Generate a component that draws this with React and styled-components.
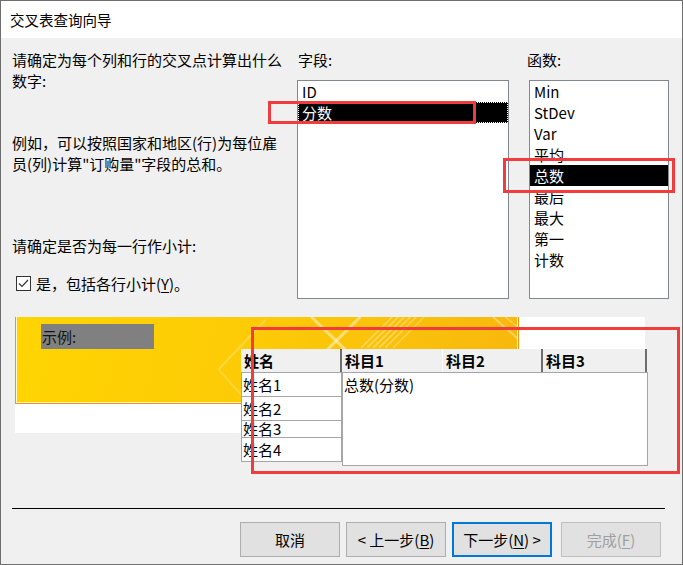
import React from "react";
import styled, { createGlobalStyle } from "styled-components";

const GlobalStyle = createGlobalStyle`
  html, body {
    margin: 0;
    padding: 0;
    background: #ffffff;
  }
  body {
    font-family: "Noto Sans CJK SC", "Liberation Sans", sans-serif;
    color: #000;
  }
`;

const fieldItems = ["ID", "分数"];
const funcItems = ["Min", "StDev", "Var", "平均", "总数", "最后", "最大", "第一", "计数"];
const rowNames = [
  { name: "姓名1", h: 24 },
  { name: "姓名2", h: 24 },
  { name: "姓名3", h: 17 },
  { name: "姓名4", h: 24 },
];
const columns = [
  { name: "科目1", w: 101, dark: false },
  { name: "科目2", w: 100, dark: true },
  { name: "科目3", w: 104, dark: true },
];

const App = () => {
  return (
    <>
      <GlobalStyle />
      <Window>
        <TitleBar>交叉表查询向导</TitleBar>

        <TopSection>
          <LeftCol>
            <Para>
              请确定为每个列和行的交叉点计算出什么
              <br />
              数字:
            </Para>
            <Para $gap={41}>
              例如，可以按照国家和地区(行)为每位雇
              <br />
              员(列)计算"订购量"字段的总和。
            </Para>
            <Para $gap={61}>请确定是否为每一行作小计:</Para>
            <CheckRow>
              <CheckBox>
                <svg width="13" height="13" viewBox="0 0 13 13">
                  <path d="M2 6.5 L5 9.5 L11 3" fill="none" stroke="#333" strokeWidth="1.2" />
                </svg>
              </CheckBox>
              <span>
                是，包括各行小计(<U>Y</U>)。
              </span>
            </CheckRow>
          </LeftCol>

          <FieldCol>
            <ColLabel $pad={1}>字段:</ColLabel>
            <ListBox $width={212}>
              {fieldItems.map((f) => (
                <ListItem key={f} $selected={f === "分数"} $focus={f === "分数"}>
                  {f}
                </ListItem>
              ))}
            </ListBox>
          </FieldCol>

          <FuncCol>
            <ColLabel>函数:</ColLabel>
            <ListBox $width={140} $shift={2}>
              {funcItems.map((f) => (
                <ListItem key={f} $selected={f === "总数"}>
                  {f}
                </ListItem>
              ))}
            </ListBox>
          </FuncCol>
        </TopSection>

        <SampleArea>
          <SampleBox>
            <Banner>
              <BannerArt viewBox="0 0 503 87" preserveAspectRatio="none">
                <g stroke="#fff" fill="none">
                  <path d="M203 53 L250 3" strokeWidth="2" opacity="0.25" />
                  <path d="M203 53 L232 86" strokeWidth="2" opacity="0.2" />
                  <path d="M296 0 L370 72" strokeWidth="3" opacity="0.45" />
                  <path d="M345 0 L290 55" strokeWidth="3" opacity="0.45" />
                  <path d="M346 31 L377 0" strokeWidth="1.5" opacity="0.35" />
                  <path d="M352 31 L383 0" strokeWidth="1.5" opacity="0.35" />
                  <path d="M358 31 L389 0" strokeWidth="1.5" opacity="0.35" />
                  <path d="M364 31 L395 0" strokeWidth="1.5" opacity="0.35" />
                  <path d="M370 31 L401 0" strokeWidth="1.5" opacity="0.3" />
                  <path d="M378 31 L409 0" strokeWidth="1.5" opacity="0.25" />
                  <path d="M478 0 L503 22" strokeWidth="2" opacity="0.35" />
                  <path d="M490 0 L503 10" strokeWidth="1.5" opacity="0.3" />
                </g>
              </BannerArt>
              <SampleLabel>示例:</SampleLabel>
            </Banner>
          </SampleBox>

          <SampleGrid>
            <RowHeaderCol>
              <HeadCell $width={101} $dark>
                姓名
              </HeadCell>
              <RowList>
                {rowNames.map((r) => (
                  <RowCell key={r.name} $h={r.h}>
                    {r.name}
                  </RowCell>
                ))}
              </RowList>
            </RowHeaderCol>
            <DataCol>
              <HeadRow>
                {columns.map((c) => (
                  <HeadCell key={c.name} $width={c.w} $dark={c.dark}>
                    {c.name}
                  </HeadCell>
                ))}
              </HeadRow>
              <DataBody>总数(分数)</DataBody>
            </DataCol>
          </SampleGrid>
        </SampleArea>

        <Separator />

        <ButtonRow>
          <Button>取消</Button>
          <Button>
            &lt; 上一步(<U>B</U>)
          </Button>
          <Button $primary>
            下一步(<U>N</U>) &gt;
          </Button>
          <Button $disabled $gap={9}>
            完成(<U>F</U>)
          </Button>
        </ButtonRow>

        <Highlight style={{ left: 267, top: 100, width: 208, height: 23 }} />
        <Highlight style={{ left: 502, top: 157, width: 172, height: 35 }} />
        <Highlight style={{ left: 250, top: 326, width: 429, height: 147 }} />
      </Window>
    </>
  );
};

export default App;

const Window = styled.div`
  position: relative;
  width: 683px;
  height: 565px;
  box-sizing: border-box;
  border: 1px solid #6e6e6e;
  background: #f0f0f0;
  display: flex;
  flex-direction: column;
  overflow: hidden;
`;

const TitleBar = styled.div`
  height: 37px;
  flex: none;
  background: #ffffff;
  display: flex;
  align-items: center;
  padding-left: 9px;
  font-size: 14.5px;
  color: #000;
`;

const TopSection = styled.div`
  display: flex;
  padding: 11px 0 0 11px;
  height: 251px;
  flex: none;
`;

const LeftCol = styled.div`
  width: 274px;
  font-size: 15px;
  line-height: 21px;
`;

const Para = styled.div`
  margin-top: ${(p) => p.$gap || 0}px;
  white-space: nowrap;
`;

const CheckRow = styled.div`
  display: flex;
  align-items: center;
  gap: 5px;
  margin-top: 17px;
  padding-left: 4px;
`;

const CheckBox = styled.span`
  width: 15px;
  height: 15px;
  box-sizing: border-box;
  border: 1px solid #333;
  background: #fff;
  display: flex;
  align-items: center;
  justify-content: center;
`;

const U = styled.span`
  text-decoration: underline;
  text-underline-offset: 2px;
`;

const FieldCol = styled.div`
  margin-left: 11px;
  display: flex;
  flex-direction: column;
`;

const FuncCol = styled.div`
  margin-left: 18px;
  display: flex;
  flex-direction: column;
`;

const ColLabel = styled.div`
  font-size: 15px;
  line-height: 21px;
  padding-left: ${(p) => p.$pad || 0}px;
  height: 21px;
  margin-bottom: 10px;
`;

const ListBox = styled.div`
  width: ${(p) => p.$width}px;
  margin-left: ${(p) => p.$shift || 0}px;
  height: 219px;
  box-sizing: border-box;
  border: 1px solid #828790;
  background: #fff;
`;

const ListItem = styled.div`
  height: 21px;
  line-height: 21px;
  font-size: 15px;
  padding-left: 4px;
  box-sizing: border-box;
  background: ${(p) => (p.$selected ? "#000" : "transparent")};
  color: ${(p) => (p.$selected ? "#fff" : "#000")};
  outline: ${(p) => (p.$focus ? "1px dotted #fff" : "none")};
  outline-offset: -1px;
`;

const SampleArea = styled.div`
  position: relative;
  margin: 17px 0 0 14px;
  height: 150px;
  flex: none;
`;

const SampleBox = styled.div`
  width: 630px;
  height: 116px;
  background: #fff;
`;

const Banner = styled.div`
  position: relative;
  width: 504px;
  height: 87px;
  box-sizing: border-box;
  border: 1px solid #f39419;
  border-top: none;
  box-shadow: inset 1px 0 0 #fff6cc, inset -1px 0 0 #fff6cc, inset 0 -1px 0 #fff6cc;
  background: linear-gradient(105deg, #ffd502 0%, #fdcb06 45%, #fac00b 75%, #f8b70d 100%);
  padding: 7px 0 0 25px;
`;

const BannerArt = styled.svg`
  position: absolute;
  inset: 0;
  width: 100%;
  height: 100%;
`;

const SampleLabel = styled.div`
  position: relative;
  width: 113px;
  height: 25px;
  line-height: 25px;
  background: #808080;
  color: #141414;
  font-size: 15px;
  padding-left: 1px;
  box-sizing: border-box;
`;

const SampleGrid = styled.div`
  position: absolute;
  left: 226px;
  top: 32px;
  display: flex;
  font-size: 15px;
`;

const RowHeaderCol = styled.div`
  display: flex;
  flex-direction: column;
  width: 101px;
`;

const HeadCell = styled.div`
  width: ${(p) => p.$width}px;
  height: 23px;
  box-sizing: border-box;
  background: #f0f0f0;
  font-weight: 700;
  line-height: 23px;
  padding-left: 3px;
  border-right: ${(p) => (p.$dark ? "2px solid #6d6d6d" : "1px solid #ffffff")};
  white-space: nowrap;
`;

const RowList = styled.div`
  border-top: 1px solid #a6a6a6;
`;

const RowCell = styled.div`
  height: ${(p) => p.$h}px;
  line-height: ${(p) => p.$h - 1}px;
  box-sizing: border-box;
  background: #fff;
  border: 1px solid #a6a6a6;
  border-top: none;
  padding-left: 1px;
  white-space: nowrap;
`;

const DataCol = styled.div`
  display: flex;
  flex-direction: column;
  width: 306px;
`;

const HeadRow = styled.div`
  display: flex;
  border-bottom: 1px solid #a6a6a6;
`;

const DataBody = styled.div`
  height: 93px;
  box-sizing: border-box;
  background: #fff;
  border: 1px solid #a6a6a6;
  border-top: none;
  padding: 1px 0 0 1px;
  line-height: 21px;
`;

const Separator = styled.div`
  margin: 41px 17px 0 11px;
  height: 1px;
  background: #000;
  flex: none;
`;

const ButtonRow = styled.div`
  display: flex;
  justify-content: flex-end;
  gap: 6px;
  margin-top: 13px;
  padding-right: 21px;
`;

const Button = styled.div`
  width: 100px;
  height: 35px;
  box-sizing: border-box;
  margin-left: ${(p) => (p.$gap ? p.$gap - 6 : 0)}px;
  display: flex;
  align-items: center;
  justify-content: center;
  font-size: 15px;
  background: #e1e1e1;
  border: ${(p) =>
    p.$primary ? "2px solid #0078d7" : p.$disabled ? "1px solid #bfbfbf" : "1px solid #adadad"};
  color: ${(p) => (p.$disabled ? "#a0a0a0" : "#000")};
  white-space: nowrap;
`;

const Highlight = styled.div`
  position: absolute;
  box-sizing: border-box;
  border: 3px solid #f03c3c;
  pointer-events: none;
`;
